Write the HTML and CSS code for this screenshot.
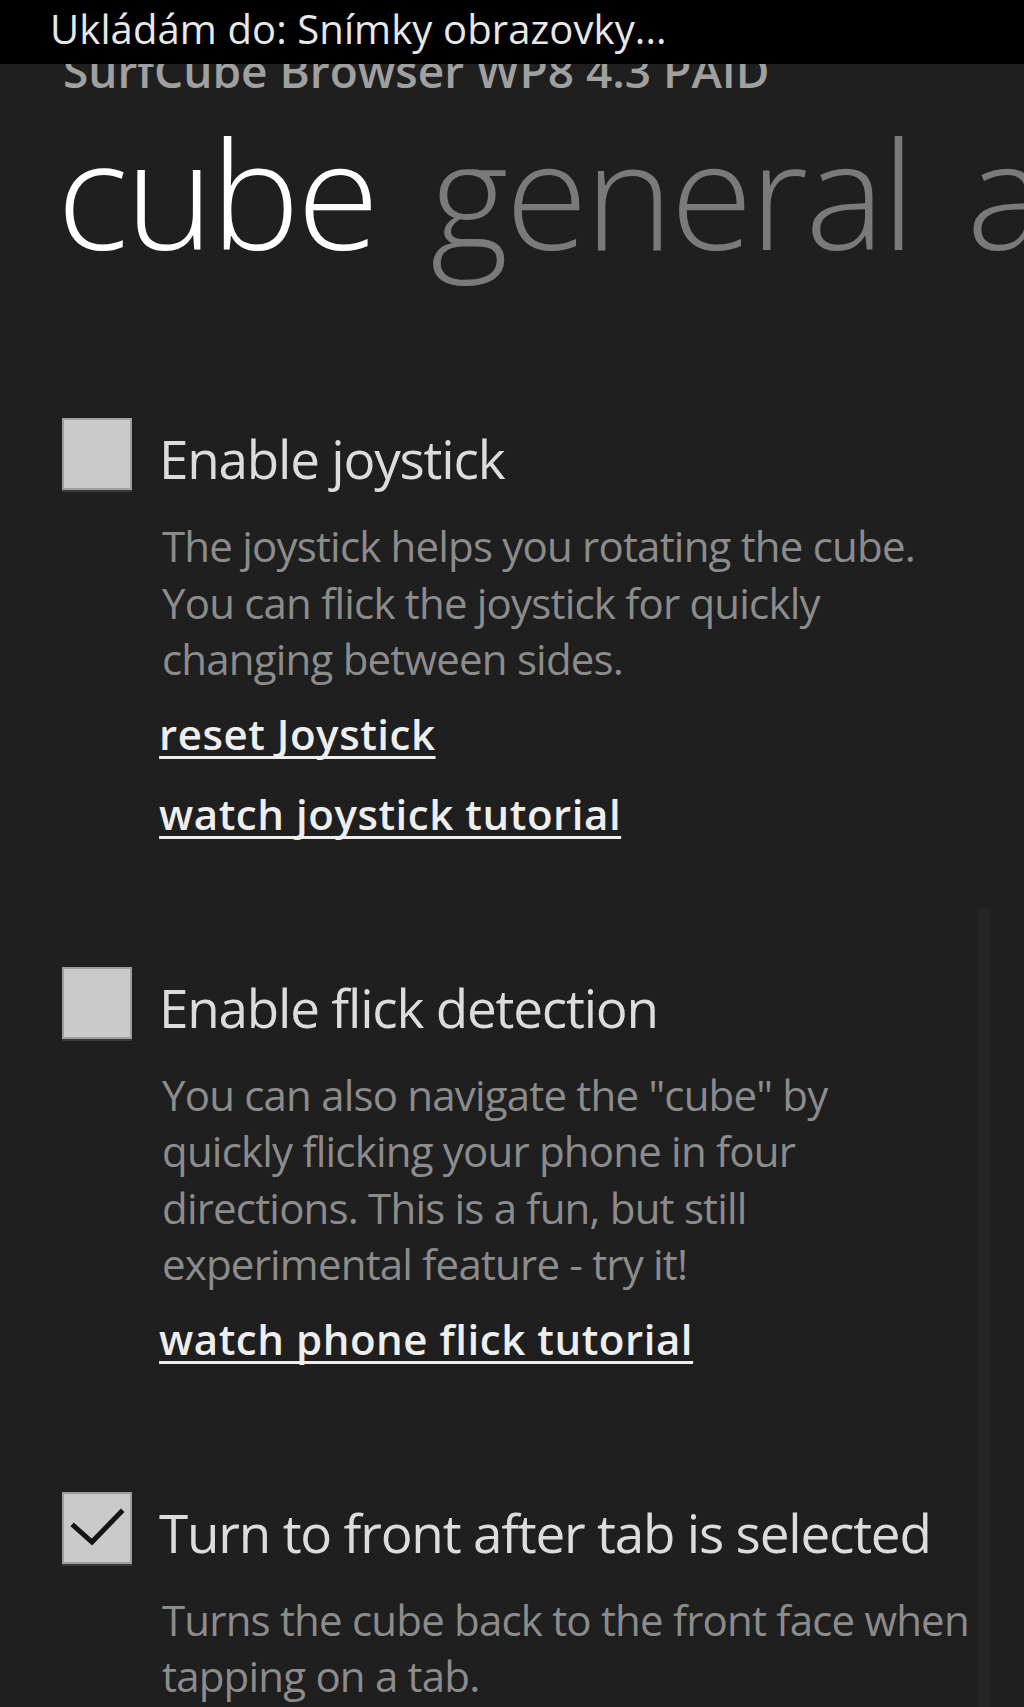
FILE: index.html
```html
<!DOCTYPE html>
<html lang="en">
<head>
<meta charset="utf-8">
<title>SurfCube Browser settings</title>
<link rel="stylesheet" href="styles.css">
</head>
<body>
<div class="screen">
  <div class="statusbar">Ukládám do: Snímky obrazovky...</div>
  <div class="scroll-indicator"></div>
  <div class="app-title">SurfCube Browser WP8 4.3 PAID</div>
  <div class="pivot">
    <span class="pivot-item active">cube</span>
    <span class="pivot-item">general</span>
    <span class="pivot-item">advanced</span>
  </div>
  <div class="settings">
    <div class="setting">
      <div class="checkbox"></div>
      <div class="setting-body">
        <div class="setting-title">Enable joystick</div>
        <div class="setting-desc">The joystick helps you rotating the cube.<br>You can flick the joystick for quickly<br>changing between sides.</div>
        <div class="links">
          <a class="link" href="#">reset Joystick</a>
          <a class="link" href="#">watch joystick tutorial</a>
        </div>
      </div>
    </div>
    <div class="setting">
      <div class="checkbox"></div>
      <div class="setting-body">
        <div class="setting-title">Enable flick detection</div>
        <div class="setting-desc">You can also navigate the "cube" by<br>quickly flicking your phone in four<br>directions. This is a fun, but still<br>experimental feature - try it!</div>
        <div class="links">
          <a class="link" href="#">watch phone flick tutorial</a>
        </div>
      </div>
    </div>
    <div class="setting">
      <div class="checkbox checked">
        <svg viewBox="0 0 70 72" width="70" height="72" aria-hidden="true"><path d="M12 34 L30 50 L59 20" fill="none" stroke="#141414" stroke-width="5" stroke-linecap="square" stroke-linejoin="miter"/></svg>
      </div>
      <div class="setting-body">
        <div class="setting-title">Turn to front after tab is selected</div>
        <div class="setting-desc">Turns the cube back to the front face when<br>tapping on a tab.</div>
      </div>
    </div>
  </div>
</div>
</body>
</html>
```
FILE: styles.css
```css
html, body {
  margin: 0;
  padding: 0;
  background: #1f1f1f;
}
body {
  width: 1024px;
  height: 1707px;
  overflow: hidden;
  font-family: "Open Sans", "Noto Sans", "DejaVu Sans", sans-serif;
}
.screen {
  position: relative;
  width: 1024px;
  height: 1707px;
  overflow: hidden;
  background: #1f1f1f;
  padding-top: 45px;
  box-sizing: border-box;
}
.statusbar {
  position: absolute;
  top: 0;
  left: 0;
  right: 0;
  height: 64px;
  background: #000;
  color: #e8e8e8;
  font-size: 40px;
  line-height: 58px;
  padding-left: 50px;
  letter-spacing: 0.1px;
  white-space: nowrap;
  z-index: 2;
}
.scroll-indicator {
  position: absolute;
  left: 978px;
  top: 907px;
  width: 12px;
  bottom: 0;
  background: #262626;
  border-radius: 6px 6px 0 0;
}
.app-title {
  margin-left: 63px;
  font-size: 46px;
  line-height: 50px;
  font-weight: 600;
  color: #a0a0a0;
  letter-spacing: 0;
  white-space: nowrap;
}
.pivot {
  margin-top: 17px;
  margin-left: 57px;
  white-space: nowrap;
  font-size: 150px;
  line-height: 160px;
  font-weight: 300;
  letter-spacing: -3px;
  display: flex;
  gap: 54px;
}
.pivot-item {
  color: #7a7a7a;
}
.pivot-item.active {
  color: #ffffff;
}
.settings {
  margin-top: 146px;
  margin-left: 62px;
  display: flex;
  flex-direction: column;
  gap: 125px;
}
.setting {
  display: grid;
  grid-template-columns: 70px 1fr;
  column-gap: 27px;
  align-items: start;
}
.checkbox {
  width: 70px;
  height: 72px;
  box-sizing: border-box;
  background: #cacaca;
  border: 2px solid #9e9e9e;
  box-shadow: 0 2px 0 #3a3a3a;
}
.checkbox svg {
  display: block;
  margin: -2px;
}
.setting-body {
  padding-top: 11px;
}
.setting-title {
  font-size: 53px;
  line-height: 60px;
  color: #dcdcdc;
  letter-spacing: -1.2px;
  white-space: nowrap;
}
.setting-desc {
  margin-top: 29px;
  margin-left: 3px;
  font-size: 42px;
  line-height: 56.5px;
  color: #8c8c8c;
  letter-spacing: -0.8px;
  white-space: nowrap;
}
.links {
  margin-top: 18px;
  display: flex;
  flex-direction: column;
  align-items: flex-start;
  gap: 24px;
}
.link {
  font-size: 42px;
  line-height: 56px;
  font-weight: 600;
  color: #eeeeee;
  text-decoration: underline;
  text-decoration-thickness: 3px;
  text-underline-offset: 6px;
  text-decoration-skip-ink: none;
  letter-spacing: 0.55px;
  white-space: nowrap;
}
```
